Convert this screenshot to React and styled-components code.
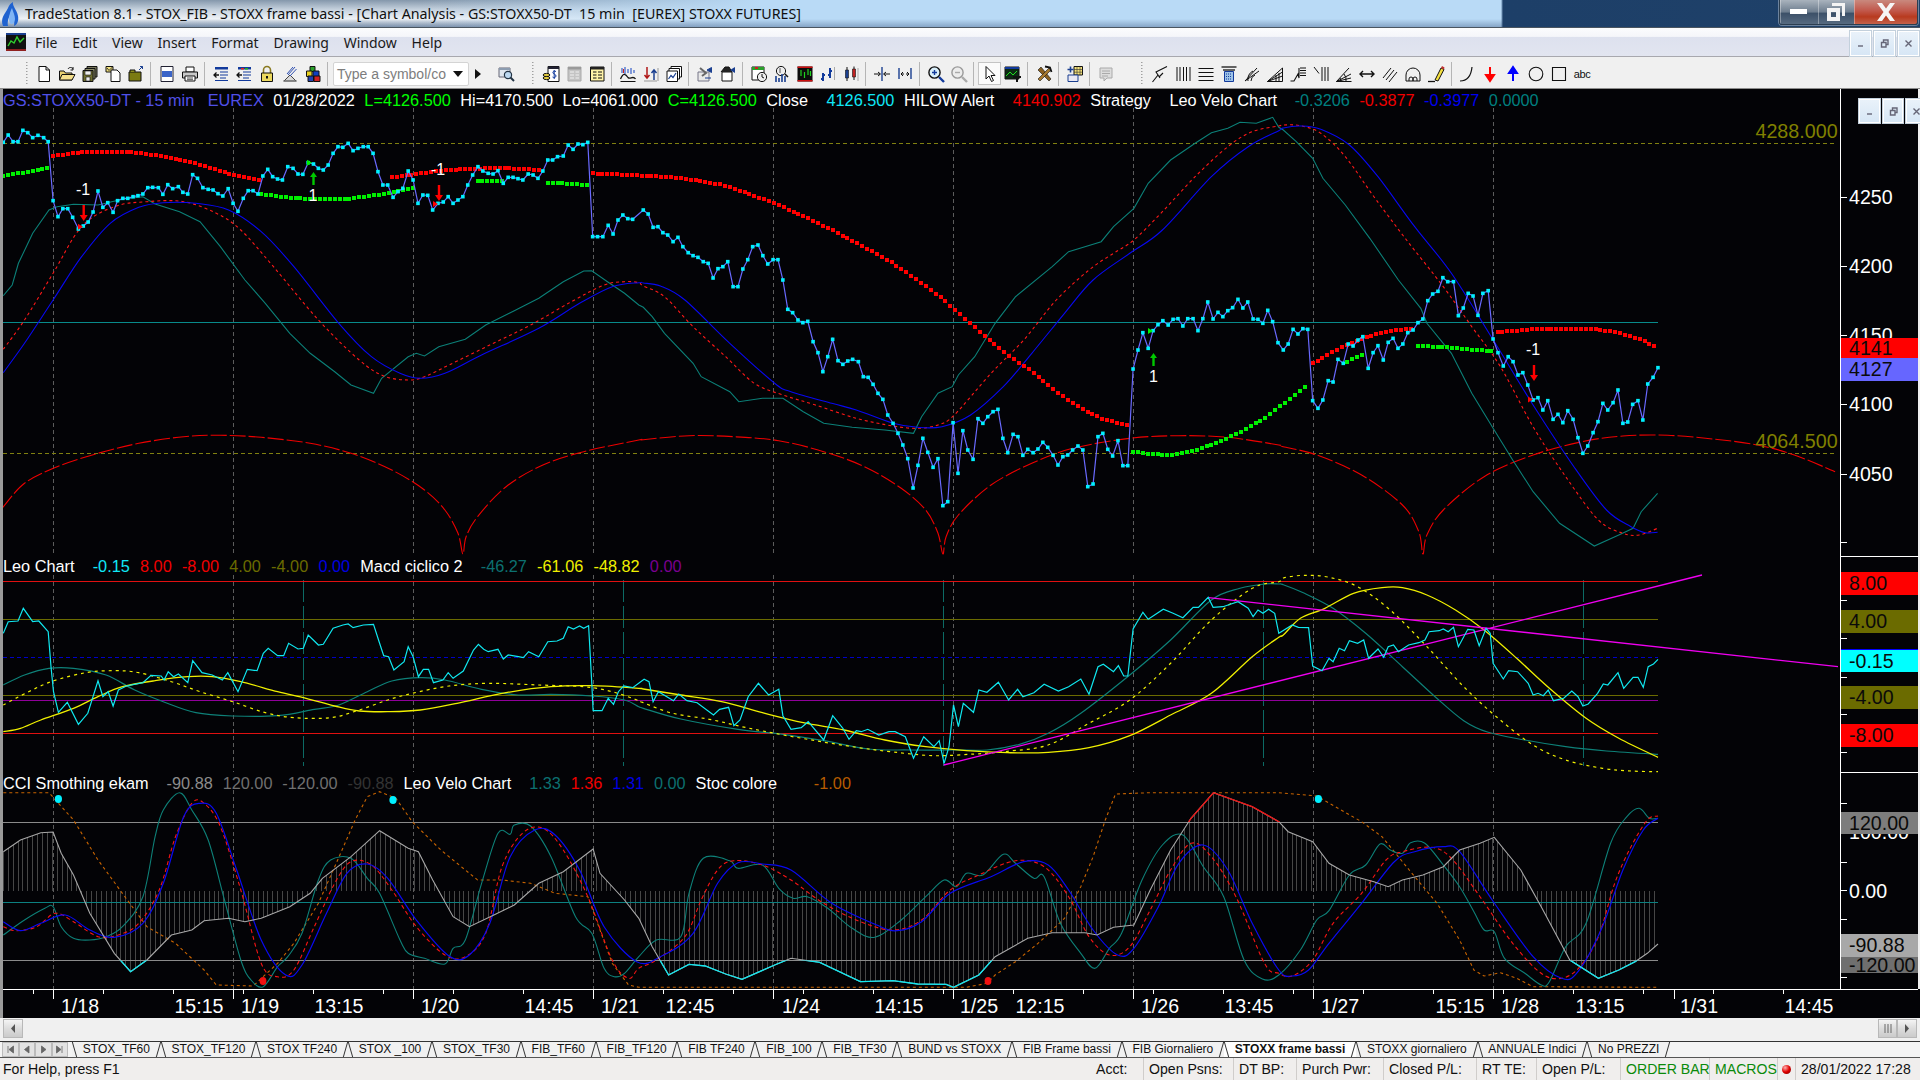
import React from "react";
import styled, { createGlobalStyle } from "styled-components";

// traced points: pairs read from the 2.45x / 3x crops, turned into page coordinates here
const crop = (x0, y0, flat) => {
  const out = [];
  for (let i = 0; i < flat.length; i += 2) out.push([x0 + flat[i] / 2.45, y0 + flat[i + 1] / 3]);
  return out;
};
const join = (y0, a, b, c) => {
  const pts = [...crop(0, y0, a), ...crop(640, y0, b), ...crop(1280, y0, c)];
  return pts.filter((p, i) => i === 0 || p[0] - pts[i - 1][0] > 0.8);
};
const line = (pts) => pts.map((p, i) => (i ? "L" : "M") + p[0].toFixed(1) + " " + p[1].toFixed(1)).join("");
const smooth = (pts) => {
  let d = "M" + pts[0][0].toFixed(1) + " " + pts[0][1].toFixed(1);
  for (let i = 0; i < pts.length - 1; i++) {
    const p0 = pts[i - 1] || pts[i], p1 = pts[i], p2 = pts[i + 1], p3 = pts[i + 2] || p2;
    const c1 = [p1[0] + (p2[0] - p0[0]) / 6, p1[1] + (p2[1] - p0[1]) / 6];
    const c2 = [p2[0] - (p3[0] - p1[0]) / 6, p2[1] - (p3[1] - p1[1]) / 6];
    d += `C${c1[0].toFixed(1)} ${c1[1].toFixed(1)} ${c2[0].toFixed(1)} ${c2[1].toFixed(1)} ${p2[0].toFixed(1)} ${p2[1].toFixed(1)}`;
  }
  return d;
};
const yAt = (pts, x) => {
  for (let i = 0; i < pts.length - 1; i++) {
    if (x >= pts[i][0] && x <= pts[i + 1][0]) {
      const t = (x - pts[i][0]) / (pts[i + 1][0] - pts[i][0] || 1);
      return pts[i][1] + t * (pts[i + 1][1] - pts[i][1]);
    }
  }
  return pts[pts.length - 1][1];
};
const STEP = 4.9;
const sample = (pts) => {
  const out = [];
  for (let x = pts[0][0]; x <= pts[pts.length - 1][0] + 0.1; x += STEP) out.push([x, yAt(pts, x)]);
  return out;
};

const price = join(90,
  [8,157,20,135,32,155,44,155,56,121,68,128,80,143,93,136,107,143,118,155,130,332,142,380,154,356,166,356,178,382,192,417,204,408,216,396,228,366,240,303,252,352,264,338,277,367,288,332,301,325,313,325,326,320,338,317,350,312,362,293,374,292,388,293,399,313,411,284,423,296,437,290,448,307,460,312,472,254,484,265,497,293,510,298,522,300,534,311,546,318,559,296,571,340,583,364,596,325,608,302,620,302,632,312,644,258,656,238,668,260,680,267,692,270,705,230,718,235,730,252,742,253,755,218,768,222,780,235,792,240,804,225,816,190,828,170,840,172,853,160,865,182,877,175,890,170,902,170,914,190,926,245,938,285,950,285,963,322,975,305,987,295,1000,243,1012,270,1024,340,1036,315,1048,316,1060,360,1073,340,1086,336,1098,320,1110,340,1122,330,1134,320,1146,285,1158,255,1171,230,1183,243,1196,250,1208,252,1220,242,1233,280,1245,262,1257,262,1269,266,1281,270,1294,252,1306,255,1318,265,1330,243,1342,210,1354,210,1366,200,1380,198,1392,165,1404,178,1416,162,1428,164,1440,157,1452,440,1464,440,1477,440,1490,406,1502,432,1514,390,1526,375,1538,386,1550,388],
  [8,360,20,372,32,412,44,410,56,428,68,435,81,455,93,442,105,470,118,488,130,497,142,502,155,515,167,520,179,564,191,536,203,530,215,515,228,590,240,590,252,537,264,509,276,470,289,465,301,497,313,522,326,509,338,509,350,570,362,658,374,668,387,690,399,698,411,694,424,755,436,788,448,845,460,800,472,748,485,812,497,823,509,813,521,808,535,815,547,860,559,862,571,883,583,910,595,928,607,975,620,1000,632,1030,644,1065,656,1106,669,1194,681,1126,693,1045,705,1087,718,1132,730,1106,742,1247,754,1235,767,998,779,1150,791,1022,803,1080,816,1108,828,986,840,1000,852,980,865,965,877,958,889,1045,901,1088,914,1033,926,1040,938,1096,950,1078,963,1088,975,1077,987,1057,999,1072,1012,1096,1024,1125,1036,1100,1048,1095,1060,1080,1073,1068,1085,1080,1097,1190,1110,1182,1122,1040,1134,1030,1146,1078,1158,1098,1171,1052,1183,1127,1195,1127,1208,837,1220,780,1232,728,1245,775,1257,722,1269,704,1281,692,1294,705,1306,688,1318,686,1330,708,1342,686,1355,686,1367,722,1379,686,1391,636,1404,687,1416,667,1428,680,1440,662,1452,653,1465,628,1477,654,1489,636,1502,687,1514,688,1526,700,1538,661,1550,695,1563,758],
  [8,780,20,762,32,718,44,732,56,716,68,718,80,932,93,955,105,930,118,872,130,876,142,808,155,820,167,762,179,768,191,750,203,740,216,835,228,788,240,767,253,810,265,757,277,745,289,775,301,762,313,728,326,720,338,698,350,687,362,632,374,612,387,604,399,563,411,575,425,575,437,677,449,654,461,610,473,618,485,676,497,610,510,602,522,747,534,788,547,828,559,800,571,815,583,855,595,848,607,885,620,930,632,923,644,960,656,932,669,988,681,973,693,998,705,962,718,988,730,1043,742,1090,754,1068,767,1028,779,995,791,940,803,960,816,938,828,900,840,1000,852,996,864,943,877,932,889,990,901,882,914,862,926,833]
);

const redDots = [
  crop(0, 90, [130,197,180,190,220,185,300,186,340,188,400,200,460,214,520,235,580,258,636,270]),
  crop(0, 90, [960,262,1020,252,1090,240,1170,236,1232,234,1330,240]),
  [...crop(0, 90, [1452,250,1564,256]), ...crop(640, 90, [12,257,100,264,200,284,260,308,330,340,400,378,470,420,540,465,620,520,680,570,740,625,800,690,850,745,900,793,960,845,1020,905,1080,955,1130,985,1197,1007])],
  crop(1280, 90, [80,820,150,772,215,740,270,722,330,715]),
  crop(1280, 90, [533,726,620,718,680,716,770,717,830,728,880,747,925,772]),
];
const greenDots = [
  crop(0, 90, [8,258,118,235]),
  crop(0, 90, [640,312,700,322,770,328,850,327,950,310,1012,295]),
  crop(0, 90, [1170,272,1230,274]),
  crop(0, 90, [1342,278,1445,285]),
  [...crop(640, 90, [1208,1085,1250,1092,1300,1095,1360,1082,1420,1055,1480,1020,1530,985,1565,950]), ...crop(1280, 90, [8,942,70,882])],
  crop(1280, 90, [165,815,205,793]),
  crop(1280, 90, [338,767,420,773,525,785]),
];

const pTeal = join(90,
  [8,617,30,585,45,520,80,430,120,360,140,350,180,343,240,345,300,328,350,320,380,342,440,365,490,395,540,470,600,570,650,640,710,730,760,790,820,845,860,885,915,910,935,865,1000,800,1020,790,1040,798,1075,770,1140,748,1190,705,1260,662,1320,625,1380,575,1430,543,1450,542,1490,577,1530,610,1565,645],
  [8,652,30,680,60,730,130,820,150,860,220,905,242,935,300,925,350,925,400,965,450,1000,520,1012,600,1020,670,1030,690,980,730,910,765,890,780,855,820,800,870,700,920,620,1010,530,1050,485,1130,455,1160,410,1210,355,1245,280,1300,210,1360,160,1400,128,1440,115,1470,97,1510,100,1550,82,1565,112],
  [8,120,40,155,80,205,105,265,160,345,220,445,290,570,345,655,360,700,420,790,470,910,520,1010,570,1110,620,1205,685,1300,770,1368,830,1335,865,1315,885,1265,925,1210]
);
const pRed = join(90,
  [8,778,60,690,130,550,200,410,280,350,360,335,450,335,530,370,590,420,670,530,780,690,880,810,940,858,1000,870,1040,860,1100,825,1200,765,1300,705,1400,635,1480,585,1530,575,1565,578],
  [8,588,60,620,130,710,210,800,280,880,350,915,430,945,530,985,620,1008,680,1015,730,1005,770,975,860,850,940,750,1020,630,1100,540,1160,490,1210,450,1280,365,1360,260,1440,170,1500,125,1565,108],
  [8,105,50,107,100,130,160,200,230,320,310,450,400,590,470,710,540,830,620,1010,700,1160,780,1290,840,1330,880,1335,925,1315]
);
const pBlue = join(90,
  [8,848,60,760,130,630,200,500,270,400,340,352,400,338,480,340,560,360,640,425,720,530,830,700,910,800,980,850,1030,865,1090,850,1180,795,1320,715,1420,640,1500,590,1565,578],
  [8,579,50,588,110,630,220,760,330,880,370,905,470,940,530,960,620,1000,680,1012,740,1010,810,975,890,890,960,790,1040,670,1110,570,1200,490,1280,420,1400,260,1490,170,1565,122],
  [8,114,50,108,100,118,170,165,240,260,330,410,420,550,520,745,620,945,720,1130,800,1260,860,1310,895,1328,925,1327]
);
const pArc = join(90,
  [5,1255,60,1180,140,1130,240,1090,340,1060,450,1040,540,1036,640,1042,760,1060,860,1090,960,1140,1040,1200,1090,1260,1122,1330,1134,1392,1142,1340,1170,1280,1240,1190,1330,1125,1430,1085,1565,1050],
  [8,1049,120,1037,230,1040,340,1052,450,1085,550,1130,640,1195,700,1260,730,1330,742,1392,750,1340,780,1275,860,1185,960,1120,1060,1075,1200,1045,1320,1037,1440,1042,1565,1065],
  [8,1070,90,1095,200,1155,300,1245,340,1325,350,1392,360,1335,400,1260,500,1160,620,1095,740,1055,840,1038,950,1036,1060,1047,1170,1065,1260,1095,1360,1145]
);

const mCyan = join(550,
  [8,250,20,215,44,213,57,175,80,215,95,213,118,245,125,350,131,425,143,487,165,457,192,523,215,490,240,392,252,440,265,425,277,468,290,420,310,408,350,398,370,376,395,378,402,390,412,365,425,380,437,372,460,398,472,332,495,368,520,375,545,390,558,368,583,425,606,358,630,362,645,310,657,295,680,317,695,317,707,280,730,297,743,295,755,255,780,285,792,283,816,235,840,225,853,222,865,233,890,225,915,223,930,280,940,317,952,320,965,360,990,335,1000,290,1012,320,1025,380,1037,358,1050,358,1062,398,1085,390,1098,368,1110,385,1135,363,1160,300,1172,283,1185,298,1196,305,1220,298,1233,327,1245,315,1270,320,1282,323,1295,305,1320,320,1342,275,1365,273,1380,265,1392,230,1405,237,1420,228,1430,235,1442,227,1450,400,1453,482,1475,482,1490,445,1503,463,1515,425,1528,408,1550,413],
  [10,388,22,395,32,455,45,425,82,452,95,432,115,452,140,458,180,495,195,478,217,472,230,527,245,510,265,440,290,400,315,435,340,418,350,497,370,538,395,533,412,515,450,570,472,497,497,535,512,568,530,542,542,545,558,538,585,555,610,545,625,545,650,560,670,625,695,560,720,590,733,572,745,640,757,590,768,465,780,530,792,460,817,487,830,420,850,427,878,397,903,450,925,418,938,440,965,428,990,403,1025,423,1050,410,1080,387,1100,433,1122,350,1135,343,1160,365,1172,347,1185,378,1195,378,1208,237,1232,187,1245,208,1282,178,1306,190,1330,203,1355,172,1368,172,1392,142,1404,172,1428,170,1465,155,1490,175,1502,200,1514,180,1526,190,1540,178,1555,190,1565,250],
  [30,225,45,232,70,233,80,348,103,362,120,325,130,335,145,295,158,302,170,272,190,280,205,270,217,325,240,297,254,322,265,290,278,285,290,305,315,285,340,278,355,270,365,245,390,242,400,237,412,245,425,232,437,290,460,238,475,240,488,287,505,235,515,250,522,340,547,387,560,362,582,365,608,400,620,435,632,430,645,437,657,420,670,452,695,445,715,423,730,440,742,468,755,462,778,430,792,402,803,405,828,368,842,415,865,382,877,382,890,412,902,350,915,342,926,328]
);
const mYellow = join(550,
  [8,545,50,535,100,510,180,475,240,440,300,410,380,392,460,380,520,380,590,395,680,425,750,445,820,468,880,483,950,485,1030,480,1120,460,1230,430,1350,410,1450,407,1565,415],
  [8,417,100,435,200,455,300,488,400,518,500,540,600,570,700,590,800,602,900,608,1000,607,1100,593,1200,557,1300,495,1400,430,1500,320,1565,262],
  [8,255,50,205,110,175,180,130,250,113,300,113,360,135,430,180,500,240,580,325,660,415,750,505,830,565,926,622]
);
const mYellowDash = join(550,
  [8,465,70,425,130,393,210,368,280,362,340,368,420,395,490,425,570,455,650,488,720,503,810,503,880,480,950,450,1010,430,1100,408,1200,400,1320,405,1430,410,1500,425,1565,452],
  [8,458,80,490,170,508,250,530,330,550,430,572,530,592,620,606,720,617,820,612,900,604,1000,585,1100,520,1200,450,1300,340,1400,210,1500,115,1565,95],
  [8,84,60,76,120,82,190,110,270,180,360,290,450,410,530,500,620,585,700,630,790,655,860,663,926,665]
);
const mTeal = join(550,
  [8,405,60,375,120,355,180,355,260,375,330,420,400,455,480,488,570,498,680,497,770,478,830,465,900,425,960,393,1030,383,1090,390,1180,418,1270,435,1350,433,1450,438,1530,450,1565,470],
  [8,475,100,507,240,538,350,553,450,572,560,597,660,600,770,600,850,600,930,583,1000,550,1080,490,1200,375,1300,270,1400,150,1470,115,1530,102,1565,102],
  [8,104,60,130,130,175,210,250,300,350,380,440,450,512,510,547,600,570,700,590,800,603,926,613]
);

const cTeal = join(550,
  [8,1155,60,1110,110,1075,130,1070,150,1130,180,1165,220,1170,260,1160,300,1130,350,1040,380,860,400,780,440,728,470,780,510,870,550,1050,590,1230,615,1290,645,1310,680,1250,705,1220,740,1150,780,990,810,930,860,925,900,985,930,1030,980,1170,1000,1210,1040,1225,1090,1242,1110,1195,1140,1170,1180,1000,1220,850,1250,853,1260,825,1300,828,1350,920,1410,1100,1450,1150,1480,1255,1505,1280,1530,1270,1565,1220],
  [40,1170,100,1160,120,1030,155,925,220,932,240,955,300,945,340,1015,375,1045,410,1040,460,1075,520,1135,575,1162,640,1110,700,1040,745,990,775,1010,800,970,840,975,890,913,920,940,965,985,990,980,1030,1120,1080,1210,1115,1255,1150,1195,1180,1150,1230,990,1280,885,1330,855,1380,950,1430,1040,1480,1230,1525,1287,1565,1275],
  [50,1200,90,1110,120,1082,170,975,210,945,245,882,270,900,300,910,320,878,355,880,400,945,440,1010,475,1085,500,1140,525,1145,550,1225,600,1270,640,1305,660,1295,700,1190,750,1120,810,880,850,800,880,775,905,805,926,805]
);
const cRed = join(550,
  [8,1130,40,1142,90,1130,135,1090,180,1115,240,1160,290,1155,340,1120,390,1020,430,860,470,760,500,760,540,830,590,1020,640,1240,680,1280,720,1260,770,1130,820,1000,860,935,910,945,960,1020,1020,1130,1090,1215,1140,1220,1190,1150,1230,950,1280,850,1330,835,1380,900,1440,1040,1500,1230,1540,1285,1565,1255],
  [40,1230,110,1160,150,1050,190,960,230,932,300,945,370,990,450,1060,540,1115,620,1140,690,1110,760,1020,830,975,920,932,990,950,1050,1040,1100,1160,1150,1215,1200,1190,1250,1080,1300,960,1350,880,1400,920,1460,1040,1530,1240,1565,1270],
  [30,1278,80,1230,130,1120,200,1030,260,930,300,905,370,892,420,925,490,1040,570,1180,640,1270,690,1285,735,1250,780,1160,820,1000,860,890,900,810,926,798]
);
const cBlue = join(550,
  [8,1115,50,1142,100,1120,160,1095,220,1140,280,1162,350,1120,400,1000,450,800,490,760,530,790,580,960,640,1170,700,1275,740,1245,800,1090,850,970,900,942,950,985,1020,1110,1100,1218,1150,1215,1200,1120,1250,920,1310,840,1360,855,1420,960,1480,1130,1560,1235],
  [50,1220,130,1150,190,1000,240,938,300,942,370,960,470,1060,580,1125,630,1142,690,1115,760,1030,860,980,940,935,1000,945,1050,1020,1110,1140,1170,1215,1210,1195,1270,1070,1320,940,1380,885,1440,960,1500,1120,1565,1260],
  [30,1278,70,1260,120,1180,200,1060,280,935,330,905,400,890,440,905,520,1050,620,1220,690,1285,730,1265,790,1130,840,960,890,840,926,805]
);
const cOrange = join(550,
  [8,728,120,728,180,810,240,930,300,1030,360,1130,430,1180,500,1260,530,1305,620,1308,680,1240,720,1180,780,1060,820,950,870,810,900,740,930,725,970,745,1010,815,1080,900,1170,990,1230,990,1300,1000,1360,1030,1440,1040,1500,1240,1540,1305,1565,1312],
  [800,1312,850,1300,870,1275,920,1235,980,1175,1040,1105,1080,1010,1110,920,1140,810,1165,732,1250,728,1565,728],
  [90,738,200,815,250,860,330,980,385,1060,440,1170,475,1260,500,1278,540,1268,580,1285,620,1310,926,1312]
);
const cCci = join(550,
  [8,905,50,870,100,848,130,846,150,910,180,975,220,1090,280,1210,320,1265,360,1230,420,1155,470,1140,500,1112,560,1105,600,1115,640,1105,710,1070,760,1030,790,985,860,920,930,842,1000,895,1025,905,1060,990,1110,1100,1150,1130,1210,1095,1260,1065,1320,1000,1380,965,1453,897,1470,970,1530,1050,1565,1105],
  [30,1190,70,1275,120,1243,160,1248,210,1272,250,1288,330,1245,370,1225,440,1237,540,1295,620,1292,680,1302,750,1303,768,1312,830,1275,870,1220,950,1165,1010,1148,1090,1148,1120,1155,1160,1132,1210,1125,1250,1020,1300,900,1350,805,1405,728,1500,770,1565,815],
  [20,845,80,875,120,940,170,975,230,995,265,1010,300,990,350,975,400,950,440,900,490,880,525,862,590,960,640,1070,710,1230,780,1285,830,1260,870,1235,900,1210,926,1182]
);

const GRID_X = [53.5, 233.5, 413.5, 593.5, 773.5, 953.5, 1133.5, 1313.5, 1493.5];
const TICKS = Array.from({ length: 26 }, (_, i) => 33.7 + 70 * i);
const TIME_LABELS = [
  ["1/18", 80], ["15:15", 199], ["1/19", 260], ["13:15", 339], ["1/20", 440], ["14:45", 549], ["1/21", 620], ["12:45", 690],
  ["1/24", 801], ["14:15", 899], ["1/25", 979], ["12:15", 1040], ["1/26", 1160], ["13:45", 1249], ["1/27", 1340], ["15:15", 1460],
  ["1/28", 1520], ["13:15", 1600], ["1/31", 1699], ["14:45", 1809],
];

const TABS = ["STOX_TF60", "STOX_TF120", "STOX TF240", "STOX _100", "STOX_TF30", "FIB_TF60", "FIB_TF120", "FIB TF240", "FIB_100", "FIB_TF30", "BUND vs STOXX", "FIB Frame bassi", "FIB Giornaliero", "STOXX frame bassi", "STOXX giornaliero", "ANNUALE Indici", "No PREZZI"];
const MENUS = ["File", "Edit", "View", "Insert", "Format", "Drawing", "Window", "Help"];

const GlobalStyle = createGlobalStyle`
  html, body { margin: 0; padding: 0; background: #000; }
  * { box-sizing: border-box; }
`;

const Shell = styled.div`
  width: 1920px;
  height: 1080px;
  overflow: hidden;
  display: flex;
  flex-direction: column;
  font-family: "Liberation Sans", Arial, sans-serif;
  background: #f0f0f0;
`;

const TitleBar = styled.div`
  height: 28px;
  flex: none;
  display: flex;
  align-items: flex-start;
  border-bottom: 1px solid #4a5560;
  background:
    linear-gradient(90deg, transparent 1501px, #1d3f68 1503px, #1f4169 100%),
    linear-gradient(180deg, transparent 70%, rgba(70, 100, 140, 0.45) 100%),
    linear-gradient(90deg, rgba(185, 218, 246, 0) 420px, #b9daf6 760px),
    linear-gradient(180deg, #8497ab 0, #c5d1dd 35%, #eef2f6 70%, #a9b8c8 100%);
`;

const FlameLogo = styled.svg`
  flex: none;
`;

const TitleText = styled.div`
  font-family: "Noto Sans", sans-serif;
  font-size: 14.25px;
  line-height: 28px;
  color: #101010;
  white-space: pre;
  margin-left: 4px;
`;

const WindowButtons = styled.div`
  margin-left: auto;
  margin-right: 2px;
  height: 25px;
  width: 139px;
  display: flex;
  border: 1px solid #2c3e50;
  border-top: none;
  border-radius: 0 0 3px 3px;
  overflow: hidden;
  box-shadow: 0 0 0 1px rgba(255, 255, 255, 0.35);
`;

const WindowButton = styled.div`
  flex: ${(p) => p.$grow || 1};
  display: flex;
  align-items: center;
  justify-content: center;
  border-left: 1px solid rgba(255, 255, 255, 0.35);
  background: ${(p) => (p.$close
    ? "linear-gradient(180deg, #c9897e 0, #c1574a 45%, #b83a1f 70%, #c4614a 100%)"
    : "linear-gradient(180deg, #a9b3bd 0, #6d7d8e 50%, #3c5068 55%, #566a80 100%)")};
`;

const MenuBar = styled.div`
  height: 29px;
  flex: none;
  display: flex;
  align-items: center;
  padding-left: 6px;
  border-bottom: 1px solid #a8a8ae;
  background: linear-gradient(180deg, #fbfcfd 0, #f5f6fa 30%, #dde1ee 34%, #e2e5f0 100%);
`;

const MenuLogo = styled.svg`
  width: 20px;
  height: 18px;
  margin-right: 9px;
  flex: none;
`;

const MenuItem = styled.span`
  font-family: "Noto Sans", sans-serif;
  font-size: 14px;
  color: #1a1a1a;
  margin-right: 14.8px;
`;

const MdiGroup = styled.div`
  margin-left: auto;
  display: flex;
  gap: 1px;
  padding-top: 2px;
  align-self: flex-start;
`;

const MdiButton = styled.div`
  width: 23px;
  height: 27px;
  display: flex;
  align-items: center;
  justify-content: center;
  border: 1px solid #c3d0dc;
  background: linear-gradient(180deg, #eaf2fa 0, #d6e6f5 100%);
  box-shadow: inset 0 0 0 1px #fff;
`;

const ChartMdi = styled.div`
  position: absolute;
  top: 9px;
  left: 17px;
  width: 70px;
  display: flex;
  gap: 1px;
  & > div { height: 26px; }
`;

const ToolBar = styled.div`
  height: 32px;
  flex: none;
  display: flex;
  align-items: center;
  padding: 2px 0 0 26px;
  background: #f0f0f0;
  border-bottom: 1px solid #8c8c8c;
`;

const Gripper = styled.div`
  width: 6px;
  height: 24px;
  flex: none;
  margin-left: ${(p) => p.$ml || 0}px;
  margin-right: ${(p) => p.$mr || 0}px;
  background: repeating-linear-gradient(180deg, #a0a0a0 0 1px, transparent 1px 3px);
  background-size: 1.5px 100%;
  background-repeat: no-repeat;
`;

const ToolIcon = styled.div`
  width: 23px;
  height: 23px;
  flex: none;
  margin-left: ${(p) => p.$ml || 0}px;
  display: flex;
  align-items: center;
  justify-content: center;
  ${(p) => p.$on && "background: #fbfbfb; outline: 1px solid #c4c4c4; outline-offset: -1px;"}
  & svg { width: 18px; height: 18px; display: block; }
`;

const ToolSep = styled.div`
  width: 8px;
  height: 24px;
  flex: none;
  background: linear-gradient(90deg, transparent 3px, #b5b5b5 3px, #b5b5b5 4px, transparent 4px);
`;

const SymbolBox = styled.div`
  width: 136px;
  height: 24px;
  margin-left: 1px;
  flex: none;
  display: flex;
  align-items: center;
  justify-content: space-between;
  padding: 0 5px 0 3px;
  background: #fff;
  border: 1px solid #d4d4d4;
  border-radius: 2px;
  font-size: 14px;
  color: #7d7d7d;
  white-space: nowrap;
`;

const AbcLabel = styled.span`
  font-size: 11px;
  color: #111;
  letter-spacing: -0.4px;
`;

const ChartFrame = styled.div`
  width: 1920px;
  height: 929px;
  flex: none;
  display: flex;
  flex-direction: column;
  background: #030306;
  border-left: 3px solid #9a9a9a;
`;

const Pane = styled.div`
  height: ${(p) => p.$h}px;
  flex: none;
  display: flex;
`;

const Plot = styled.div`
  position: relative;
  width: 1837px;
  height: 100%;
  & > svg { display: block; }
`;

const Legend = styled.div`
  position: absolute;
  top: 0;
  left: 0;
  display: flex;
  gap: ${(p) => p.$gap}px;
  white-space: nowrap;
  font-size: 16.3px;
  line-height: ${(p) => p.$lh}px;
`;

const LegendItem = styled.span`
  color: ${(p) => p.$c || "#fff"};
  margin-left: ${(p) => p.$ml || 0}px;
`;

const Axis = styled.div`
  position: relative;
  width: 80px;
  height: 100%;
  background: #030306;
  border-left: 1px solid #fff;
  border-right: 2px solid #f0f0f0;
  border-bottom: ${(p) => (p.$line ? "1px solid #fff" : "none")};
`;

const Tick = styled.div`
  position: absolute;
  left: 0;
  top: ${(p) => p.$y}px;
  width: 6px;
  height: 1px;
  background: #fff;
`;

const AxisText = styled.div`
  position: absolute;
  left: 8px;
  top: ${(p) => p.$y - 12}px;
  line-height: 24px;
  font-size: 19.6px;
  color: #fff;
`;

const Tag = styled.div`
  position: absolute;
  left: 0;
  right: 0;
  top: ${(p) => p.$y}px;
  height: ${(p) => p.$h}px;
  line-height: ${(p) => p.$h}px;
  padding-left: 8px;
  font-size: 19.6px;
  color: #0a0a0a;
  background: ${(p) => p.$bg};
  ${(p) => p.$topLine && `border-top: 1px solid ${p.$topLine}; line-height: ${p.$h - 1}px;`}
`;

const TimeAxis = styled.svg`
  display: block;
  flex: none;
  font-family: "Liberation Sans", Arial, sans-serif;
`;

const ScrollBar = styled.div`
  height: 23px;
  flex: none;
  display: flex;
  align-items: flex-start;
  padding: 1px 3px 0 3px;
  background: #f0f0f0;
`;

const ScrollBtn = styled.div`
  width: ${(p) => p.$w || 20}px;
  height: 19px;
  display: flex;
  align-items: center;
  justify-content: center;
  border: 1px solid #b8b8b8;
  background: linear-gradient(180deg, #f4f4f4 0, #dcdcdc 50%, #cbcbcb 100%);
  margin-left: ${(p) => (p.$auto ? "auto" : "0")};
`;

const TabBar = styled.div`
  height: 17px;
  flex: none;
  display: flex;
  align-items: stretch;
  background: #f4f4f4;
  border-top: 1px solid #333;
  border-bottom: 1px solid #555;
`;

const TabNav = styled.div`
  width: 72px;
  flex: none;
  display: flex;
  padding-left: 2px;
`;

const TabNavBtn = styled.div`
  width: 16.5px;
  display: flex;
  align-items: center;
  justify-content: center;
  background: #e2e2e2;
  border: 1px solid #bbb;
`;

const Tab = styled.div`
  position: relative;
  padding: 0 10.8px;
  font-size: 12px;
  line-height: 15px;
  color: #111;
  white-space: nowrap;
  font-weight: ${(p) => (p.$on ? 700 : 400)};
  background: ${(p) => (p.$on ? "#fff" : "#f1f1f1")};
  &::before, &::after {
    content: "";
    position: absolute;
    top: 0;
    bottom: 0;
    width: 0;
    border-left: 1px solid #333;
  }
  &::before { left: 2px; transform: skewX(16deg); }
  &::after { right: 2px; transform: skewX(-16deg); }
`;

const StatusBar = styled.div`
  height: 22px;
  flex: none;
  display: flex;
  align-items: center;
  background: #f0eeed;
  font-size: 14.1px;
  color: #111;
  white-space: nowrap;
  padding-left: 3px;
`;

const StatusHelp = styled.div`
  margin-right: auto;
`;

const StatusCell = styled.div`
  width: ${(p) => p.$w}px;
  height: 22px;
  line-height: 22px;
  flex: none;
  padding-left: 5px;
  border-right: ${(p) => (p.$last ? "none" : "1px solid #d0cdcb")};
  color: ${(p) => p.$c || "#111"};
`;

const Ball = styled.div`
  width: 9px;
  height: 9px;
  border-radius: 50%;
  background: radial-gradient(circle at 35% 30%, #ffb0b0, #e00000 50%, #700000);
`;

const BallCell = styled.div`
  width: 18.5px;
  height: 22px;
  flex: none;
  display: flex;
  align-items: center;
  justify-content: center;
  border-right: 1px solid #d0cdcb;
`;

const Glyph = ({ d, c = "#333", w = 1.4 }) => (
  <svg width="11" height="11" viewBox="0 0 11 11"><path d={d} fill="none" stroke={c} strokeWidth={w} /></svg>
);
const MDI_GLYPHS = ["M3 8H8", "M2.5 4.5H7V9H2.5ZM4.5 4.5V2H9V6.5H7", "M2.5 2.5L8.5 8.5M8.5 2.5L2.5 8.5"];
const NAV = ["M3 2V9M8.5 2L4 5.5L8.5 9Z", "M8 2L3.5 5.5L8 9Z", "M3.5 2L8 5.5L3.5 9Z", "M2.5 2L7 5.5L2.5 9ZM8 2V9"];

// toolbar drawings, 18x18
const O = "#111";
const ICONS = {
  new: <path d="M4 1.5H11L14.5 5V16.5H4ZM11 1.5V5H14.5" fill="#fff" stroke={O} />,
  open: <><path d="M1.5 6H6L7.5 8H14V15H1.5Z" fill="#e8d070" stroke={O} /><path d="M1.5 15L4 9.5H17L14 15Z" fill="#f5e08c" stroke={O} /><path d="M10 4C11 2 14 2 15 4M15 2V5H12.5" fill="none" stroke={O} /></>,
  saveall: <><path d="M6 1.5H16V12H6Z" fill="#77775a" stroke={O} /><path d="M4 3.5H14V14H4Z" fill="#8c8c68" stroke={O} /><path d="M2 5.5H12V16.5H2Z" fill="#6e6e30" stroke={O} /><path d="M4 6H10V10H4ZM5 12H9V16H5Z" fill="#eee" stroke={O} strokeWidth=".6" /></>,
  docs: <><path d="M2 1.5H9V7H2Z" fill="#f4e27a" stroke={O} /><path d="M3 3L5 5.5L8.5 2" fill="none" stroke="#333" /><path d="M7 5H13L16 8V16.5H7Z" fill="#fff" stroke={O} /></>,
  folder2: <><path d="M2 7H14V16H2Z" fill="#7b7b12" stroke={O} /><path d="M3 7V5H8V7" fill="#8e8e20" stroke={O} /><path d="M12 5L15.5 1.5M13 1.5H15.5V4" fill="none" stroke="#1a3f90" /></>,
  preview: <><path d="M3 1.5H15V16.5H3Z" fill="#fff" stroke="#223" /><path d="M4 6H14V12H4Z" fill="#3a64c8" /></>,
  print: <><path d="M5 2H13V7H5Z" fill="#fff" stroke={O} /><path d="M1.5 7H16.5V13H1.5Z" fill="#c9c9c9" stroke={O} /><path d="M4 11H14V16H4Z" fill="#fff" stroke={O} /><path d="M6 13H12M6 14.7H12" stroke="#555" /></>,
  list: <><path d="M3 2H16V4.5H3Z" fill="#123a9c" /><path d="M8 7H16M8 10H16M8 13H14" stroke="#123a9c" /><path d="M7 10H2M4.5 7.5L2 10L4.5 12.5" fill="none" stroke={O} strokeWidth="1.3" /><path d="M3 15.5H16" stroke="#123a9c" /></>,
  list2: <><path d="M3 2H16V4.5H3Z" fill="#123a9c" /><path d="M6 3H9V4.5H6Z" fill="#e02020" /><path d="M10 3H13V4.5H10Z" fill="#20b020" /><path d="M8 7H16M8 10H16M8 13H14" stroke="#123a9c" /><path d="M7 10H2M4.5 7.5L2 10L4.5 12.5" fill="none" stroke={O} strokeWidth="1.3" /><path d="M3 15.5H16" stroke="#123a9c" /></>,
  lock: <><path d="M5.5 8V5A3.5 3.5 0 0 1 12.5 5V8" fill="none" stroke="#8a7a20" strokeWidth="1.6" /><path d="M3.5 8H14.5V16.5H3.5Z" fill="#ecd95e" stroke={O} /><path d="M8 11H10V13.5H8Z" fill={O} /></>,
  hatch: <><path d="M3 16L9 10L15 16Z" fill="#d8d8d8" stroke="#444" /><path d="M7 10L14 2M9 11L15.5 4M6 9L12 2" stroke="#3050b0" /><path d="M2 16H16" stroke="#777" /></>,
  cubes: <><path d="M6 1.5H11V6.5H6Z" fill="#2aa02a" stroke={O} /><path d="M2.5 6H8V11.5H2.5Z" fill="#e8d020" stroke={O} /><path d="M9 6H15V11.5H9Z" fill="#1040c0" stroke={O} /><path d="M4 11H9.5V16.5H4Z" fill="#2040b0" stroke={O} /><path d="M10 11H16V16.5H10Z" fill="#d02020" stroke={O} /></>,
  find: <><path d="M2 3H13V12H2Z" fill="#dfe6ee" stroke="#667" /><path d="M2 3H13V5H2Z" fill="#8c9cb0" /><circle cx="11" cy="10" r="3.6" fill="#bcd8f0" stroke="#234" strokeWidth="1.2" /><path d="M13.5 12.5L17 16" stroke="#234" strokeWidth="2" /></>,
  money: <><path d="M6 1.5H17V16.5H6Z" fill="#fff" stroke={O} /><path d="M6 1.5H17V4H6Z" fill="#223" /><ellipse cx="4.5" cy="10" rx="3.4" ry="1.6" fill="#e6cf40" stroke={O} /><ellipse cx="4.5" cy="13" rx="3.4" ry="1.6" fill="#e6cf40" stroke={O} /><path d="M14 6.5C12 5.5 10.5 6.5 11 8C11.5 9.5 14 9 14 11C14 12.5 12 13 10.5 12M12.2 5V14" fill="none" stroke="#123a9c" /></>,
  gridGrey: <><path d="M3 2H16V16H3Z" fill="#c4c4c4" stroke="#aaa" /><path d="M3 2H16V4.5H3Z" fill="#9a9a9a" /><path d="M5 7H9M10.5 7H14M5 10H9M10.5 10H14M5 13H9M10.5 13H14" stroke="#f0f0f0" /></>,
  grid: <><path d="M2.5 2H16V16H2.5Z" fill="#fff3a8" stroke={O} /><path d="M2.5 2H16V4.5H2.5Z" fill="#222" /><path d="M5 7H8.5M10 7H14M5 10H8.5M10 10H14M5 13H8.5M10 13H14" stroke="#111" /></>,
  wave: <><path d="M3 8V3M6 9V2M9 8V4M12 9V3M15 8V5" stroke="#1040c0" /><path d="M4.5 8V4" stroke="#d02020" /><path d="M1.5 14C4 8 6 8 9 12.5C11 15 14 10 16.5 14" fill="none" stroke={O} strokeWidth="1.3" /><path d="M1.5 16.5H16.5" stroke={O} /></>,
  updown: <><path d="M5 2V13M2.5 10L5 13L7.5 10" fill="none" stroke="#b01818" strokeWidth="1.5" /><path d="M12 15V5M9.5 8L12 5L14.5 8" fill="none" stroke="#1a3f90" strokeWidth="1.5" /><path d="M2 16H15M16 3V16" stroke="#999" /></>,
  stack: <><path d="M6 1.5H16.5V12H6Z" fill="#fff" stroke={O} /><path d="M4 3.5H14.5V14H4Z" fill="#fff" stroke={O} /><path d="M2 6H12.5V16.5H2Z" fill="#fff" stroke={O} /><path d="M3.5 14L6 10.5L8 12.5L11 8" fill="none" stroke="#1a3f90" strokeWidth="1.2" /></>,
  pageBlue: <><path d="M2 7H13V16H2Z" fill="#e8e8e8" stroke="#778" /><path d="M4 3L10 8L6 11" fill="none" stroke="#666" strokeWidth="2" /><path d="M11 5L15.5 2.5V7.5ZM15 13H9" fill="#1a3f90" stroke="#1a3f90" /></>,
  folderBlue: <><path d="M3 7H13V16H3Z" fill="#fff" stroke={O} /><path d="M2 7L6 2H10L13 7" fill="#222" stroke={O} /><path d="M11 5L16 2V8Z" fill="#1a3f90" /></>,
  cal: <><path d="M2 2H14V15H2Z" fill="#fff" stroke={O} /><path d="M2 2H14V5H2Z" fill="#2aa02a" /><path d="M5 2H8V4H5Z" fill="#d02020" /><circle cx="12" cy="12" r="4.6" fill="#eee" stroke={O} /><path d="M12 9V12L14 13" fill="none" stroke={O} /></>,
  magBars: <><circle cx="8" cy="6" r="4.6" fill="#eee" stroke={O} /><path d="M7 3V8" stroke="#555" /><path d="M3 17V11M6 17V13M9 17V9M12 17V11" stroke="#1a3f90" strokeWidth="1.6" /><path d="M12 9L15 12" stroke={O} strokeWidth="1.5" /></>,
  black: <><path d="M1.5 1.5H16.5V16.5H1.5Z" fill="#0b0b0b" /><path d="M1.5 1.5H16.5V3H1.5ZM1.5 15H16.5V16.5H1.5Z" fill="#d01010" /><path d="M5 5V11M8.5 7V13M12 4V10M14.5 6V11" stroke="#20d020" strokeWidth="1.2" /></>,
  barsBlue: <><path d="M4 8V16M2 14H4M4 10H6" stroke="#123a9c" strokeWidth="2" fill="none" /><path d="M11 3V13M9 10H11M11 6H13" stroke="#123a9c" strokeWidth="2" fill="none" /><path d="M15.5 2V15" stroke="#aaa" /></>,
  candles: <><path d="M5 2V16M12 1.5V15" stroke="#111" /><path d="M3.5 5H6.5V13H3.5Z" fill="#1a3f90" stroke={O} strokeWidth=".6" /><path d="M10.5 4H13.5V12H10.5Z" fill="#c02020" stroke={O} strokeWidth=".6" /><path d="M16 3V16" stroke="#aaa" /></>,
  inward: <><path d="M9 2V16" stroke="#1a3f90" strokeWidth="1.4" /><path d="M1 9H7M5 7L7.5 9L5 11M17 9H11M13 7L10.5 9L13 11" fill="none" stroke={O} /></>,
  outward: <><path d="M3 3V14M15 3V14" stroke="#1a3f90" strokeWidth="1.4" /><path d="M5 9H8M7 7L5 9L7 11M13 9H10M11 7L13 9L11 11" fill="none" stroke={O} /></>,
  zoomIn: <><circle cx="7.5" cy="7.5" r="5.6" fill="#d8eefa" stroke="#111" strokeWidth="1.4" /><path d="M5 7.5H10M7.5 5V10" stroke="#123a9c" strokeWidth="1.4" /><path d="M12 12L17 17" stroke="#123a9c" strokeWidth="2.4" /></>,
  zoomOut: <><circle cx="7.5" cy="7.5" r="5.6" fill="#ececec" stroke="#999" strokeWidth="1.4" /><path d="M5 7.5H10" stroke="#aaa" strokeWidth="1.4" /><path d="M12 12L17 17" stroke="#aaa" strokeWidth="2.4" /></>,
  cursor: <path d="M5 1.5V14L8 11L10.5 16.5L12.5 15.5L10 10.5H14Z" fill="#fff" stroke={O} />,
  chartT: <><path d="M1 2H15V14H1Z" fill="#0b2a12" stroke={O} /><path d="M1 2H15V4H1Z" fill="#123a9c" /><path d="M2 11L6 7L9 10L13 6" fill="none" stroke="#20e020" /><path d="M9 11H17V13H14V17H12V13H9Z" fill="#111" /></>,
  hammer: <><path d="M3 5L6 2L16 14L14 16Z" fill="#8a6020" stroke={O} strokeWidth=".6" /><path d="M14 3L16 5L5 16L3 14Z" fill="#a87a30" stroke={O} strokeWidth=".6" /><path d="M10 1.5L15 2.5L16.5 7" fill="none" stroke={O} strokeWidth="1.8" /></>,
  plusTable: <><path d="M8 1.5H16.5V10H8Z" fill="#f4e27a" stroke={O} /><path d="M8 4.5H16.5M8 7.2H16.5M11 1.5V10M14 1.5V10" stroke="#333" strokeWidth=".6" /><path d="M2 10H12V16.5H2Z" fill="#e8e8f4" stroke="#1a3f90" /><path d="M4.5 1.5V7.5M1.5 4.5H7.5" stroke="#1a3f90" strokeWidth="1.6" /></>,
  docGrey: <><path d="M3 3H15V13H10L7 16V13H3Z" fill="#ddd" stroke="#aaa" /><path d="M5 6H13M5 8.5H13M5 11H11" stroke="#aaa" /></>,
  fork: <path d="M1.5 17L7 10L5 7L16 1.5M8.5 11.5L12 8M7 10L9 13" fill="none" stroke={O} strokeWidth="1.1" />,
  vlines: <path d="M3 2V16M6 2V16M9.5 2V16M12.5 2V16M16 2V16" stroke={O} />,
  hlines: <path d="M1.5 3.5H16.5M1.5 7.5H16.5M1.5 11.5H16.5M1.5 15.5H16.5" stroke={O} strokeWidth="1.2" />,
  calc: <><path d="M1.5 2H16.5M3 5H15" stroke="#333" strokeWidth="1.3" /><path d="M4.5 6.5H13.5V16.5H4.5Z" fill="#9dc3e8" stroke="#123a9c" /><path d="M6 9H12M6 11.5H12M6 14H12" stroke="#123a9c" strokeDasharray="1 1" /></>,
  speed: <path d="M2 16L16 6M2 16L14 3M5 16A9 9 0 0 1 10 6M8 16A6.5 6.5 0 0 1 12 10" fill="none" stroke={O} />,
  fan: <path d="M1.5 16.5H16.5V3ZM1.5 16.5L16.5 7M1.5 16.5L16.5 11M10 16.5V10M13 16.5V8" fill="none" stroke={O} />,
  waveLines: <path d="M1.5 16H5L9 9L10 13V3M11 3H17M11 5.5H17M11 8H17M11 10.5H17" fill="none" stroke={O} strokeWidth="1.1" />,
  channel: <path d="M2 2L7 8.5M10 2V16M13 2V16M16 2V16M2 14" fill="none" stroke={O} />,
  fan2: <path d="M1.5 16.5H16.5M1.5 16.5L14 3M1.5 16.5L16 9M1.5 16.5L16 13M6 16.5A5 5 0 0 0 5 13M11 16.5A9 9 0 0 0 9 9" fill="none" stroke={O} />,
  dbl: <path d="M2 9H16M5 6L2 9L5 12M13 6L16 9L13 12" fill="none" stroke={O} strokeWidth="1.4" />,
  slashes: <path d="M2 13L10 3M5 15L13 5M8 17L16 7" fill="none" stroke={O} />,
  arcs: <path d="M2 16V10A7 7 0 0 1 16 10V16M5 16V14A2 2 0 0 1 9 14V16M9 16V14A2 2 0 0 1 13 14V16M2 16H16" fill="none" stroke={O} />,
  pencil: <><path d="M1 16.5H8" stroke={O} strokeWidth="1.3" /><path d="M8 15L14 3L17 4.5L11 16Z" fill="#f4e040" stroke={O} /><path d="M14 3L15 1L17.5 2.5L17 4.5Z" fill="#c03030" /></>,
  curve: <path d="M2 16C8 16 13 12 14 2" fill="none" stroke={O} strokeWidth="1.2" />,
  downRed: <path d="M9 2V11M5 10H13L9 16Z" fill="#ff0000" stroke="#ff0000" strokeWidth="2" />,
  upBlue: <path d="M9 16V7M5 8H13L9 2Z" fill="#0000ff" stroke="#0000ff" strokeWidth="2" />,
  circle: <circle cx="9" cy="9" r="6.8" fill="none" stroke={O} strokeWidth="1.1" />,
  rect: <path d="M2.5 2.5H15.5V15.5H2.5Z" fill="none" stroke={O} strokeWidth="1.1" />,
};
const Icon = ({ n, on }) => (
  <ToolIcon $on={on}><svg viewBox="0 0 18 18">{ICONS[n]}</svg></ToolIcon>
);
const Icons = ({ list }) => list.map((n) => <Icon key={n} n={n} on={n === "cursor"} />);

const DownArrow = ({ x, y }) => <path d={`M${x - 1.2} ${y}H${x + 1.2}V${y + 10}H${x + 4}L${x} ${y + 16}L${x - 4} ${y + 10}H${x - 1.2}Z`} fill="#ff0000" />;
const UpArrow = ({ x, y }) => <path d={`M${x - 1.2} ${y + 13}H${x + 1.2}V${y + 5}H${x + 3.5}L${x} ${y}L${x - 3.5} ${y + 5}H${x - 1.2}Z`} fill="#00c800" />;
const Flag = ({ x, y, c }) => <path d={`M${x} ${y - 3}L${x + 5} ${y}L${x} ${y + 3}Z`} fill={c} />;
const Note = ({ x, y, children }) => <text x={x} y={y + 6} fontSize="16" fill="#fff" textAnchor="middle" fontFamily="Liberation Sans">{children}</text>;
const Dots = ({ sets, c }) => sets.flatMap((s, i) => sample(s).map((p, j) => (
  <rect key={i + "-" + j} x={Math.round(p[0] - 2)} y={Math.round(p[1] - 2)} width="4" height="4" fill={c} shapeRendering="crispEdges" />
)));
const Grid = ({ from, to }) => GRID_X.map((x) => (
  <path key={x} d={`M${x} ${from}V${to}`} stroke="#5c5c5c" strokeDasharray="4 3" shapeRendering="crispEdges" />
));
const HLine = ({ y, c, to = 1658, dash }) => (
  <path d={`M3 ${y}H${to}`} stroke={c} strokeWidth="1.1" strokeDasharray={dash} shapeRendering="crispEdges" />
);
const Curve = ({ d, c, dash, w = 1.1 }) => <path d={d} fill="none" stroke={c} strokeWidth={w} strokeDasharray={dash} />;

const PricePlot = () => (
  <svg width="1837" height="468" viewBox="3 89 1837 468">
    <Grid from={108} to={555} />
    <HLine y={143.5} c="#808010" to={1836} dash="4 3" />
    <HLine y={322.5} c="#088a8a" />
    <HLine y={453.5} c="#808010" to={1836} dash="4 3" />
    <Curve d={smooth(pArc)} c="#ee0000" dash="16 3" />
    <Curve d={line(pTeal)} c="#0c8078" />
    <Curve d={smooth(pRed)} c="#ff1818" dash="3 3" />
    <Curve d={smooth(pBlue)} c="#0808f0" w="1.1" />
    <Dots sets={redDots} c="#ff0000" />
    <Dots sets={greenDots} c="#00f000" />
    <Curve d={line(price)} c="#6a6aff" w="1.2" />
    {price.map((p, i) => <rect key={i} x={p[0] - 1.8} y={p[1] - 1.8} width="3.6" height="3.6" fill="#00f0ff" />)}
    <Note x={83} y={189}>-1</Note>
    <Note x={313} y={195}>1</Note>
    <Note x={438} y={169}>-1</Note>
    <Note x={1153.5} y={376}>1</Note>
    <Note x={1533} y={349}>-1</Note>
    <DownArrow x={83.7} y={205} />
    <DownArrow x={439} y={185} />
    <DownArrow x={1534} y={365} />
    <UpArrow x={313.5} y={172} />
    <UpArrow x={1153.5} y={353} />
    <Flag x={78} y={226.7} c="#ff0000" />
    <Flag x={433} y={204} c="#ff0000" />
    <Flag x={1528} y={399.5} c="#ff0000" />
    <Flag x={307} y={162.7} c="#00f000" />
    <Flag x={1148} y={331} c="#00f000" />
    <text x="1837.6" y="138" fontSize="19.7" fill="#808000" textAnchor="end" fontFamily="Liberation Sans">4288.000</text>
    <text x="1837.6" y="448" fontSize="19.7" fill="#808000" textAnchor="end" fontFamily="Liberation Sans">4064.500</text>
  </svg>
);

const MacdPlot = () => (
  <svg width="1837" height="216" viewBox="3 557 1837 216">
    <Grid from={575} to={772} />
    {[303.5, 623.5, 943.5, 1263.5, 1583.5].map((x) => (
      <path key={x} d={`M${x} 580V766`} stroke="#0c6a64" strokeWidth="1.2" strokeDasharray="22 4" shapeRendering="crispEdges" />
    ))}
    <HLine y={581.5} c="#e01010" />
    <HLine y={619.5} c="#6b6b00" />
    <HLine y={657.5} c="#0000c8" dash="4 3" />
    <HLine y={695.5} c="#6b6b00" />
    <HLine y={700.5} c="#90009a" />
    <HLine y={733.5} c="#e01010" />
    <Curve d={smooth(mTeal)} c="#0e8078" w="1.2" />
    <Curve d={smooth(mYellowDash)} c="#f0f000" dash="3 4" w="1.2" />
    <Curve d={smooth(mYellow)} c="#f0f000" w="1.3" />
    <path d="M943.7 765L1702 575M1208.6 597.7L1838 666.7" stroke="#f000f0" strokeWidth="1.3" />
    <Curve d={line(mCyan)} c="#10e8f0" w="1.2" />
  </svg>
);

const CciPlot = () => (
  <svg width="1837" height="216" viewBox="3 773 1837 216">
    <defs>
      <clipPath id="cciLow"><rect x="0" y="960.5" width="1840" height="40" /></clipPath>
      <clipPath id="cciHigh"><rect x="0" y="773" width="1840" height="49" /></clipPath>
    </defs>
    <Grid from={790} to={989} />
    {sample(cCci).map((p) => (
      <path key={p[0]} d={`M${p[0].toFixed(1)} 890.5V${p[1].toFixed(1)}`} stroke="#464646" shapeRendering="crispEdges" />
    ))}
    <HLine y={822.5} c="#8a8a8a" />
    <HLine y={902.5} c="#0c8080" />
    <HLine y={960.5} c="#8a8a8a" />
    <Curve d={line(cOrange)} c="#c86400" dash="3 3" />
    <Curve d={smooth(cTeal)} c="#0e8078" />
    <Curve d={smooth(cRed)} c="#f81414" dash="4 3" />
    <Curve d={smooth(cBlue)} c="#0a0af0" w="1.2" />
    <Curve d={line(cCci)} c="#a8a8a8" />
    <g clipPath="url(#cciLow)"><Curve d={line(cCci)} c="#10e8f0" w="1.3" /></g>
    <g clipPath="url(#cciHigh)"><Curve d={line(cCci)} c="#f01010" w="1.3" /></g>
    {[[58.4, 799], [393, 800], [1318.4, 799]].map(([x, y]) => <ellipse key={x} cx={x} cy={y} rx="3.6" ry="4" fill="#00f0ff" />)}
    {[[263, 981], [988, 981]].map(([x, y]) => <ellipse key={x} cx={x} cy={y} rx="3.4" ry="4" fill="#f01010" />)}
  </svg>
);

const PriceAxis = () => (
  <Axis $line>
    {[108, 177, 246, 315, 385, 453].map((y) => <Tick key={y} $y={y} />)}
    {[["4250", 108], ["4200", 177], ["4150", 246], ["4100", 315], ["4050", 385]].map(([t, y]) => <AxisText key={t} $y={y}>{t}</AxisText>)}
    <Tag $y={249} $h={20} $bg="#ff0000">4141</Tag>
    <Tag $y={269} $h={23} $bg="#6666ff">4127</Tag>
    <ChartMdi>
      {MDI_GLYPHS.map((d) => <MdiButton key={d}><Glyph d={d} c="#667" /></MdiButton>)}
    </ChartMdi>
  </Axis>
);

const MacdAxis = () => (
  <Axis $line>
    {[43, 81, 120, 157, 195].map((y) => <Tick key={y} $y={y} />)}
    <Tag $y={15} $h={23} $bg="#ff0000">8.00</Tag>
    <Tag $y={53} $h={23} $bg="#6b6b00">4.00</Tag>
    <Tag $y={92} $h={23} $bg="#00ffff" $topLine="#0000ff">-0.15</Tag>
    <Tag $y={129} $h={23} $bg="#6b6b00">-4.00</Tag>
    <Tag $y={167} $h={23} $bg="#ff0000">-8.00</Tag>
  </Axis>
);

const CciAxis = () => (
  <Axis>
    {[30, 89, 117, 146, 204].map((y) => <Tick key={y} $y={y} />)}
    <AxisText $y={59}>100.00</AxisText>
    <AxisText $y={118}>0.00</AxisText>
    <Tag $y={39} $h={22} $bg="#7d7d7d">120.00</Tag>
    <Tag $y={184} $h={16} $bg="#6f6f6f">-120.00</Tag>
    <Tag $y={161} $h={23} $bg="#a8a8a8">-90.88</Tag>
  </Axis>
);

export default function App() {
  return (
    <Shell>
      <GlobalStyle />
      <TitleBar>
        <FlameLogo width="21" height="28" viewBox="0 0 21 28">
          <path d="M3 26C0 18 5 14 8 8C9 5 11 3 13 2C12 6 17 10 18 16C19 21 17 25 14 26C15 21 13 16 11 13C9 17 7 21 8 26Z" fill="#1f62d0" />
          <path d="M9 19C9 14 11 10 12 8C13 12 15 15 15 19C15 22 13 24 12 24C10 24 9 22 9 19Z" fill="#7fb4f4" />
        </FlameLogo>
        <TitleText>{"TradeStation 8.1 - STOX_FIB - STOXX frame bassi - [Chart Analysis - GS:STOXX50-DT  15 min  [EUREX] STOXX FUTURES]"}</TitleText>
        <WindowButtons>
          <WindowButton $grow={38}><svg width="18" height="8" viewBox="0 0 18 8"><rect y="1" width="17" height="5" fill="#fff" /></svg></WindowButton>
          <WindowButton $grow={36}><svg width="20" height="20" viewBox="0 0 20 20"><path d="M6 1H19V14H16V4H6ZM1 6H14V19H1ZM5 10V15H10V10Z" fill="#f4f4f4" fillRule="evenodd" /></svg></WindowButton>
          <WindowButton $grow={64} $close><svg width="20" height="18" viewBox="0 0 20 18"><path d="M1 0H6L10 5.5L14 0H19L12.5 9L19 18H14L10 12.5L6 18H1L7.5 9Z" fill="#f6f6f6" /></svg></WindowButton>
        </WindowButtons>
      </TitleBar>

      <MenuBar>
        <MenuLogo viewBox="0 0 20 18">
          <rect width="20" height="18" fill="#101010" />
          <rect width="20" height="2" fill="#1a3f90" />
          <rect y="16" width="20" height="2" fill="#902020" />
          <path d="M2 13L5 8L8 10L11 4L14 9L18 5" fill="none" stroke="#30d030" strokeWidth="1.4" />
        </MenuLogo>
        {MENUS.map((m) => <MenuItem key={m}>{m}</MenuItem>)}
        <MdiGroup>
          {MDI_GLYPHS.map((d) => <MdiButton key={d}><Glyph d={d} c="#667" /></MdiButton>)}
        </MdiGroup>
      </MenuBar>

      <ToolBar>
        <Gripper />
        <Icons list={["new", "open", "saveall", "docs", "folder2"]} />
        <ToolSep />
        <Icons list={["preview", "print"]} />
        <ToolSep />
        <Icons list={["list", "list2", "lock", "hatch", "cubes"]} />
        <ToolSep />
        <SymbolBox>Type a symbol/co<svg width="10" height="6" viewBox="0 0 10 6"><path d="M0 0H10L5 6Z" fill="#111" /></svg></SymbolBox>
        <ToolIcon $ml={-3}><svg viewBox="0 0 18 18"><path d="M6 4L12 9L6 14Z" fill="#111" /></svg></ToolIcon>
        <ToolIcon $ml={5}><svg viewBox="0 0 18 18">{ICONS.find}</svg></ToolIcon>
        <Gripper $ml={15} $mr={1} />
        <Icons list={["money", "gridGrey", "grid"]} />
        <ToolSep />
        <Icons list={["wave", "updown", "stack"]} />
        <ToolSep />
        <Icons list={["pageBlue", "folderBlue"]} />
        <ToolSep />
        <Icons list={["cal", "magBars", "black", "barsBlue", "candles"]} />
        <ToolSep />
        <Icons list={["inward", "outward"]} />
        <ToolSep />
        <Icons list={["zoomIn", "zoomOut"]} />
        <ToolSep />
        <Icons list={["cursor", "chartT"]} />
        <ToolSep />
        <Icons list={["hammer"]} />
        <ToolSep />
        <Icons list={["plusTable"]} />
        <ToolSep />
        <Icons list={["docGrey"]} />
        <Gripper $ml={24} $mr={1.5} />
        <Icons list={["fork", "vlines", "hlines", "calc", "speed", "fan", "waveLines", "channel", "fan2", "dbl", "slashes", "arcs", "pencil"]} />
        <ToolSep />
        <Icons list={["curve", "downRed", "upBlue", "circle", "rect"]} />
        <ToolIcon><AbcLabel>abc</AbcLabel></ToolIcon>
      </ToolBar>

      <ChartFrame>
        <Pane $h={468}>
          <Plot>
            <PricePlot />
            <Legend $lh={22} $gap={9.5}>
              <LegendItem $c="#5050e8">GS:STOXX50-DT - 15 min</LegendItem>
              <LegendItem $c="#5050e8" $ml={4}>EUREX</LegendItem>
              <LegendItem>01/28/2022</LegendItem>
              <LegendItem $c="#00ff00">L=4126.500</LegendItem>
              <LegendItem>Hi=4170.500</LegendItem>
              <LegendItem>Lo=4061.000</LegendItem>
              <LegendItem $c="#00ff00">C=4126.500</LegendItem>
              <LegendItem>Close</LegendItem>
              <LegendItem $c="#10e8f8" $ml={9}>4126.500</LegendItem>
              <LegendItem>HILOW Alert</LegendItem>
              <LegendItem $c="#f00000" $ml={9}>4140.902</LegendItem>
              <LegendItem>Strategy</LegendItem>
              <LegendItem $ml={9}>Leo Velo Chart</LegendItem>
              <LegendItem $c="#008080" $ml={8}>-0.3206</LegendItem>
              <LegendItem $c="#f00000">-0.3877</LegendItem>
              <LegendItem $c="#0000f0">-0.3977</LegendItem>
              <LegendItem $c="#008080">0.0000</LegendItem>
            </Legend>
          </Plot>
          <PriceAxis />
        </Pane>
        <Pane $h={216}>
          <Plot>
            <MacdPlot />
            <Legend $lh={18} $gap={10.2}>
              <LegendItem>Leo Chart</LegendItem>
              <LegendItem $c="#10e8f8" $ml={8}>-0.15</LegendItem>
              <LegendItem $c="#f00000">8.00</LegendItem>
              <LegendItem $c="#f00000">-8.00</LegendItem>
              <LegendItem $c="#6b6b00">4.00</LegendItem>
              <LegendItem $c="#6b6b00">-4.00</LegendItem>
              <LegendItem $c="#0000e0">0.00</LegendItem>
              <LegendItem>Macd ciclico 2</LegendItem>
              <LegendItem $c="#0c7070" $ml={8}>-46.27</LegendItem>
              <LegendItem $c="#f0f000">-61.06</LegendItem>
              <LegendItem $c="#f0f000">-48.82</LegendItem>
              <LegendItem $c="#7a0090">0.00</LegendItem>
            </Legend>
          </Plot>
          <MacdAxis />
        </Pane>
        <Pane $h={216}>
          <Plot>
            <CciPlot />
            <Legend $lh={20} $gap={9.9}>
              <LegendItem>CCI Smothing ekam</LegendItem>
              <LegendItem $c="#8c8c8c" $ml={8}>-90.88</LegendItem>
              <LegendItem $c="#707070">120.00</LegendItem>
              <LegendItem $c="#707070">-120.00</LegendItem>
              <LegendItem $c="#333">-90.88</LegendItem>
              <LegendItem>Leo Velo Chart</LegendItem>
              <LegendItem $c="#0c7070" $ml={8}>1.33</LegendItem>
              <LegendItem $c="#f00000">1.36</LegendItem>
              <LegendItem $c="#0000e0">1.31</LegendItem>
              <LegendItem $c="#0c7070">0.00</LegendItem>
              <LegendItem>Stoc colore</LegendItem>
              <LegendItem $c="#b85c00" $ml={27}>-1.00</LegendItem>
            </Legend>
          </Plot>
          <CciAxis />
        </Pane>
        <TimeAxis width="1917" height="29" viewBox="3 989 1917 29">
          <path d="M3 989.5H1918" stroke="#fff" shapeRendering="crispEdges" />
          {TICKS.map((x) => <path key={x} d={`M${x.toFixed(1)} 989V994`} stroke="#fff" shapeRendering="crispEdges" />)}
          {[...GRID_X, 1674].map((x) => <path key={x} d={`M${x} 989V999`} stroke="#fff" shapeRendering="crispEdges" />)}
          {TIME_LABELS.map(([t, x]) => (
            <text key={t + x} x={x} y="1012.5" fontSize="19.6" fill="#fff" textAnchor="middle">{t}</text>
          ))}
        </TimeAxis>
      </ChartFrame>

      <ScrollBar>
        <ScrollBtn><svg width="8" height="11" viewBox="0 0 8 11"><path d="M6 1L2 5.5L6 10Z" fill="#555" /></svg></ScrollBtn>
        <ScrollBtn $auto $w={19}><svg width="10" height="11" viewBox="0 0 10 11"><path d="M2 1V10M5 1V10M8 1V10" stroke="#666" /></svg></ScrollBtn>
        <ScrollBtn $w={20}><svg width="8" height="11" viewBox="0 0 8 11"><path d="M2 1L6 5.5L2 10Z" fill="#555" /></svg></ScrollBtn>
      </ScrollBar>

      <TabBar>
        <TabNav>
          {NAV.map((d) => <TabNavBtn key={d}><svg width="11" height="11" viewBox="0 0 11 11"><path d={d} fill="#666" stroke="#666" strokeWidth=".8" /></svg></TabNavBtn>)}
        </TabNav>
        {TABS.map((t) => <Tab key={t} $on={t === "STOXX frame bassi"}>{t}</Tab>)}
      </TabBar>

      <StatusBar>
        <StatusHelp>For Help, press F1</StatusHelp>
        <StatusCell $w={53}>Acct:</StatusCell>
        <StatusCell $w={90}>Open Psns:</StatusCell>
        <StatusCell $w={63}>DT BP:</StatusCell>
        <StatusCell $w={87}>Purch Pwr:</StatusCell>
        <StatusCell $w={93}>Closed P/L:</StatusCell>
        <StatusCell $w={60}>RT TE:</StatusCell>
        <StatusCell $w={84}>Open P/L:</StatusCell>
        <StatusCell $w={89} $c="#0a8a0a">ORDER BAR</StatusCell>
        <StatusCell $w={67.5} $c="#0a8a0a">MACROS</StatusCell>
        <BallCell><Ball /></BallCell>
        <StatusCell $w={124} $last>28/01/2022 17:28</StatusCell>
      </StatusBar>
    </Shell>
  );
}
